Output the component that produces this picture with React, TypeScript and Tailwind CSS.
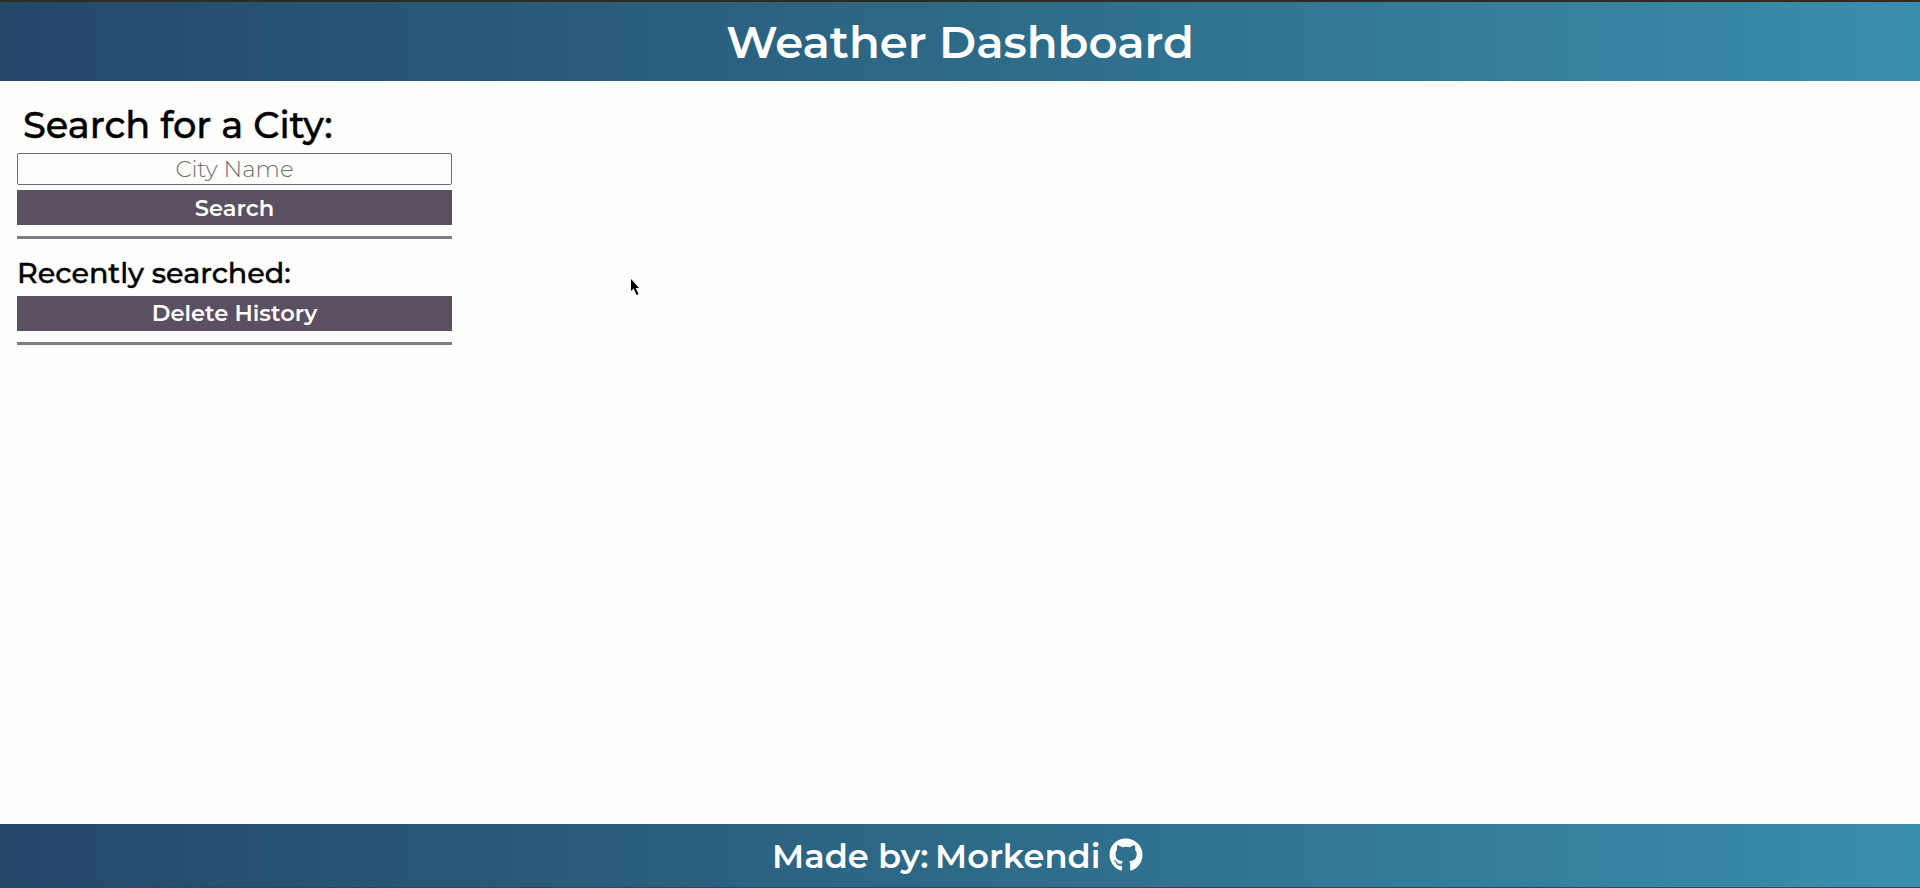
import { FaGithub } from "react-icons/fa";

export default function App() {
  return (
    <div className="relative flex h-[888px] w-full flex-col overflow-hidden bg-[#fdfdfb] font-['Montserrat','Inter',sans-serif] text-black">
      <header className="flex h-[81px] shrink-0 items-center justify-center border-t-2 border-[#2b2d24] bg-linear-to-r from-[#24476a] via-[#2d6a87] to-[#3b8dae] text-white">
        <h1 className="text-[45px] leading-[46px] font-semibold whitespace-nowrap">Weather Dashboard</h1>
      </header>
      <main className="flex grow flex-col">
        <section className="ml-[17px] flex w-[435px] flex-col">
          <h2 className="mt-[22px] h-[50px] pl-[6px] text-[36.8px] leading-[44px] font-medium whitespace-nowrap [-webkit-text-stroke:0.4px_#000]">
            Search for a City:
          </h2>
          <input
            type="text"
            placeholder="City Name"
            className="h-8 rounded-[2px] border border-[#6d6c78] bg-transparent pt-px text-center text-[22.9px] font-light placeholder:text-[#707070]"
          />
          <button className="mt-[5px] h-[35px] bg-[#5b5062] pt-px text-[22.6px] leading-none font-semibold text-white">
            Search
          </button>
          <hr className="mt-[11px] h-[3px] border-0 bg-[#7f7f7f]" />
          <h3 className="mt-[15px] h-[42px] text-[28.6px] leading-[38px] font-medium whitespace-nowrap [-webkit-text-stroke:0.4px_#000]">
            Recently searched:
          </h3>
          <button className="h-[35px] bg-[#5b5062] text-[22.6px] leading-none font-semibold text-white">
            Delete History
          </button>
          <hr className="mt-[11px] h-[3px] border-0 bg-[#7f7f7f]" />
        </section>
      </main>
      <footer className="flex h-16 shrink-0 items-center border-b border-[#2c4560] bg-linear-to-r from-[#24476a] via-[#2d6a87] to-[#3b8dae] pl-[772px] text-[33.7px] leading-none font-semibold whitespace-nowrap text-white">
        <span className="w-[163px]">Made by:</span>
        <a className="flex items-center">
          <span className="w-[174px]">Morkendi</span>
          <FaGithub className="mb-px size-[34px]" />
        </a>
      </footer>
      <svg className="absolute top-[278px] left-[630px] h-[18px] w-[10px]" viewBox="0 0 10 18">
        <path d="M1 1v12l2.6-2.4L6.5 17l2-1-2.7-6H9z" fill="#000" />
      </svg>
    </div>
  );
}
